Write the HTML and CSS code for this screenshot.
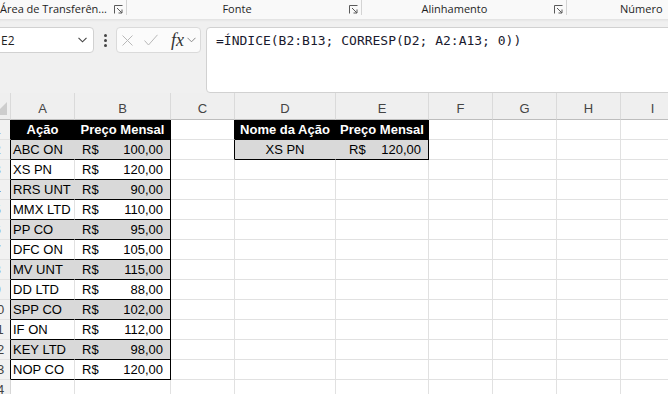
FILE: index.html
```html
<!DOCTYPE html>
<html lang="pt">
<head>
<meta charset="utf-8">
<title>Excel</title>
<link rel="stylesheet" href="styles.css">
</head>
<body>
<div class="ribbon">
  <div class="grp g1"><span class="lbl">Área de Transferên...</span><svg class="launch" viewBox="0 0 9 9"><path d="M0.5 8.5V0.5H8.5M3 3L8 8M8 4.5V8H4.5"/></svg></div>
  <div class="sep"></div>
  <div class="grp g2"><span class="lbl">Fonte</span><svg class="launch" viewBox="0 0 9 9"><path d="M0.5 8.5V0.5H8.5M3 3L8 8M8 4.5V8H4.5"/></svg></div>
  <div class="sep"></div>
  <div class="grp g3"><span class="lbl">Alinhamento</span><svg class="launch" viewBox="0 0 9 9"><path d="M0.5 8.5V0.5H8.5M3 3L8 8M8 4.5V8H4.5"/></svg></div>
  <div class="sep"></div>
  <div class="grp g4"><span class="lbl">Número</span></div>
</div>

<div class="fbar">
  <div class="namebox"><span>E2</span><svg class="chev" viewBox="0 0 9 6"><path d="M0.5 0.8L4.5 4.8L8.5 0.8"/></svg></div>
  <div class="kebab"><i></i><i></i><i></i></div>
  <div class="fxbox">
    <svg class="xic" viewBox="0 0 11 11"><path d="M0.5 0.5L10.5 10.5M10.5 0.5L0.5 10.5"/></svg>
    <svg class="ok" viewBox="0 0 14 12"><path d="M0.5 6.5L4.5 11L13.5 0.8"/></svg>
    <span class="fx">fx</span>
    <svg class="chev2" viewBox="0 0 9 6"><path d="M0.5 0.8L4.5 4.8L8.5 0.8"/></svg>
  </div>
  <div class="formula">=ÍNDICE(B2:B13; CORRESP(D2; A2:A13; 0))</div>
</div>

<div class="grid">
  <div class="row hrow">
    <div class="corner"><svg viewBox="0 0 11 26"><polygon points="-6,22 7,22 7,9"/></svg></div>
    <div>A</div><div>B</div><div>C</div><div>D</div><div>E</div><div>F</div><div>G</div><div>H</div><div>I</div>
  </div>

  <div class="row">
    <div class="rh tl"><span>1</span></div>
    <div class="blk">Ação</div><div class="blk">Preço Mensal</div><div class="rb"></div>
    <div class="blk">Nome da Ação</div><div class="blk">Preço Mensal</div>
    <div></div><div></div><div></div><div></div>
  </div>
  <div class="row">
    <div class="rh tl"><span>2</span></div>
    <div class="ga">ABC ON</div><div class="gb acc"><span>R$</span><span>100,00</span></div><div class="rb"></div>
    <div class="ga ctr">XS PN</div><div class="gb acc acce"><span>R$</span><span>120,00</span></div>
    <div></div><div></div><div></div><div></div>
  </div>
  <div class="row">
    <div class="rh tl"><span>3</span></div>
    <div class="wa">XS PN</div><div class="wb acc"><span>R$</span><span>120,00</span></div><div></div>
    <div></div><div></div><div></div><div></div><div></div><div></div>
  </div>
  <div class="row">
    <div class="rh tl"><span>4</span></div>
    <div class="ga">RRS UNT</div><div class="gb acc"><span>R$</span><span>90,00</span></div><div></div>
    <div></div><div></div><div></div><div></div><div></div><div></div>
  </div>
  <div class="row">
    <div class="rh tl"><span>5</span></div>
    <div class="wa">MMX LTD</div><div class="wb acc"><span>R$</span><span>110,00</span></div><div></div>
    <div></div><div></div><div></div><div></div><div></div><div></div>
  </div>
  <div class="row">
    <div class="rh tl"><span>6</span></div>
    <div class="ga">PP CO</div><div class="gb acc"><span>R$</span><span>95,00</span></div><div></div>
    <div></div><div></div><div></div><div></div><div></div><div></div>
  </div>
  <div class="row">
    <div class="rh tl"><span>7</span></div>
    <div class="wa">DFC ON</div><div class="wb acc"><span>R$</span><span>105,00</span></div><div></div>
    <div></div><div></div><div></div><div></div><div></div><div></div>
  </div>
  <div class="row">
    <div class="rh tl"><span>8</span></div>
    <div class="ga">MV UNT</div><div class="gb acc"><span>R$</span><span>115,00</span></div><div></div>
    <div></div><div></div><div></div><div></div><div></div><div></div>
  </div>
  <div class="row">
    <div class="rh tl"><span>9</span></div>
    <div class="wa">DD LTD</div><div class="wb acc"><span>R$</span><span>88,00</span></div><div></div>
    <div></div><div></div><div></div><div></div><div></div><div></div>
  </div>
  <div class="row">
    <div class="rh tl"><span>10</span></div>
    <div class="ga">SPP CO</div><div class="gb acc"><span>R$</span><span>102,00</span></div><div></div>
    <div></div><div></div><div></div><div></div><div></div><div></div>
  </div>
  <div class="row">
    <div class="rh tl"><span>11</span></div>
    <div class="wa">IF ON</div><div class="wb acc"><span>R$</span><span>112,00</span></div><div></div>
    <div></div><div></div><div></div><div></div><div></div><div></div>
  </div>
  <div class="row">
    <div class="rh tl"><span>12</span></div>
    <div class="ga">KEY LTD</div><div class="gb acc"><span>R$</span><span>98,00</span></div><div></div>
    <div></div><div></div><div></div><div></div><div></div><div></div>
  </div>
  <div class="row">
    <div class="rh tl"><span>13</span></div>
    <div class="wa">NOP CO</div><div class="wb acc"><span>R$</span><span>120,00</span></div><div></div>
    <div></div><div></div><div></div><div></div><div></div><div></div>
  </div>
  <div class="row">
    <div class="rh"><span>14</span></div>
    <div></div><div></div><div></div>
    <div></div><div></div><div></div><div></div><div></div><div></div>
  </div>
</div>
</body>
</html>
```

FILE: styles.css
```css
* { box-sizing: border-box; margin: 0; padding: 0; }

body {
  width: 668px;
  height: 394px;
  overflow: hidden;
  background: #ffffff;
  font-family: "Liberation Sans", Arial, sans-serif;
}

/* ribbon group labels */
.ribbon {
  height: 19px;
  background: #f9f9f9;
  display: flex;
  font-family: "Open Sans", "Noto Sans", sans-serif;
  font-size: 11px;
  color: #1f1f1f;
}
.grp { display: flex; align-items: flex-start; height: 19px; flex-shrink: 0; }
.lbl { flex: 1; text-align: center; line-height: 18px; white-space: nowrap; overflow: hidden; }
.launch {
  width: 9px; height: 9px;
  flex-shrink: 0;
  margin: 5px 3px 0 2px;
  fill: none; stroke: #5a5a5a; stroke-width: 1;
}
.g1 { width: 126px; }
.g1 .lbl { text-align: left; }
.g2 { width: 234px; }
.g3 { width: 204px; }
.g3 .lbl { padding-right: 5px; }
.g4 { width: 120px; }
.g4 .lbl { text-align: left; padding-left: 53px; }
.sep { width: 1px; height: 15px; background: #d4d4d4; flex-shrink: 0; }

/* formula bar */
.fbar {
  height: 74px;
  background: #f0f0f0;
  display: flex;
  align-items: flex-start;
  padding-top: 8px;
  box-shadow: inset 0 3px 3px -2px rgba(0, 0, 0, 0.08);
}
.namebox {
  margin-left: -6px;
  width: 100px;
  height: 26px;
  flex-shrink: 0;
  background: #ffffff;
  border: 1px solid #d1d1d1;
  border-radius: 4px;
  display: flex;
  align-items: center;
  justify-content: space-between;
  padding: 0 6px 0 6px;
  font-family: "Open Sans", sans-serif;
  font-size: 12px;
  color: #1f1f1f;
}
.chev { width: 9px; height: 6px; fill: none; stroke: #444; stroke-width: 1.1; }
.kebab {
  margin-left: 10px;
  height: 26px;
  display: flex;
  flex-direction: column;
  justify-content: center;
  gap: 2px;
}
.kebab i { display: block; width: 3px; height: 3px; border-radius: 50%; background: #444; }
.fxbox {
  margin-left: 9px;
  width: 85px;
  height: 26px;
  flex-shrink: 0;
  background: #fbfbfb;
  border: 1px solid #dadada;
  border-radius: 4px;
  display: flex;
  align-items: center;
  padding-left: 5px;
}
.xic { width: 11px; height: 11px; fill: none; stroke: #b8b8b8; stroke-width: 1; }
.ok { width: 14px; height: 12px; margin-left: 11px; fill: none; stroke: #b8b8b8; stroke-width: 1; }
.fx {
  margin-left: 13px;
  font-family: "Liberation Serif", "DejaVu Serif", serif;
  font-style: italic;
  font-size: 18px;
  line-height: 20px;
  color: #333;
}
.chev2 { width: 9px; height: 6px; margin-left: 3px; fill: none; stroke: #888; stroke-width: 1; }
.formula {
  margin-left: 5px;
  margin-right: -10px;
  flex: 1;
  height: 66px;
  background: #ffffff;
  border: 1px solid #d1d1d1;
  border-radius: 4px;
  padding: 4px 0 0 9px;
  font-family: "DejaVu Sans Mono", "Liberation Mono", monospace;
  font-size: 13px;
  line-height: 17px;
  color: #1a1a2e;
  white-space: nowrap;
}

/* grid */
.grid { font-size: 13px; color: #000; }
.row {
  display: grid;
  grid-template-columns: 11px 64px 96px 64px 101px 93px 64px 64px 64px 64px;
  height: 20px;
}
.row > div {
  border-right: 1px solid #e1e1e1;
  border-bottom: 1px solid #e1e1e1;
  padding: 1px 2px 0;
  line-height: 18px;
  white-space: nowrap;
  overflow: hidden;
}
.hrow { height: 27px; }
.hrow > div {
  background: #efefef;
  border-right-color: #dadada;
  border-bottom-color: #bdbdbd;
  text-align: center;
  color: #444;
  padding-top: 6px;
  line-height: 20px;
}
.hrow > .corner { padding: 0; }
.corner svg { display: block; width: 11px; height: 26px; fill: #cdcdcd; }

.row > .rh {
  background: #f1f1f1;
  border-right-color: #d6d6d6;
  border-bottom-color: #e2e2e2;
  color: #444;
  padding: 1px 0 0;
}
.rh span { display: block; width: 30px; margin-left: -18px; text-align: center; }
.row > .tl { border-right-color: #000; }

.row > .blk {
  background: #000;
  color: #fff;
  font-weight: bold;
  text-align: center;
  border-color: #000;
}
.row > .ga { background: #d9d9d9; border-right-color: #d9d9d9; border-bottom-color: #000; }
.row > .gb { background: #d9d9d9; border-right-color: #000; border-bottom-color: #000; }
.row > .wa { border-bottom-color: #000; }
.row > .wb { border-right-color: #000; border-bottom-color: #000; }
.row > .rb { border-right-color: #000; }
.row > .ctr { text-align: center; }
.row > .acc { display: flex; justify-content: space-between; padding-left: 7px; padding-right: 7px; }
.row > .acce { padding-left: 13px; }
```
